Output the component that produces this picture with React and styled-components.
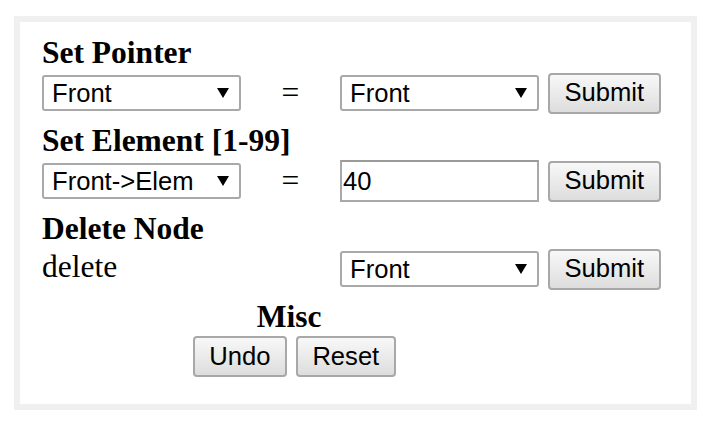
import React from "react";
import styled, { createGlobalStyle } from "styled-components";

const Global = createGlobalStyle`
  html, body { margin: 0; padding: 0; background: #fff; }
  body { font-family: "Liberation Serif", "Times New Roman", serif; color: #000; }
`;

const Page = styled.div`
  padding: 16px 0 0 14px;
`;

const Panel = styled.div`
  box-sizing: border-box;
  width: 683px;
  height: 394px;
  border: 6px solid #f0f0f0;
  background: #fff;
  padding: 13px 0 0 22px;
`;

const Section = styled.section`
  & + & { margin-top: 9px; }
`;

const Heading = styled.div`
  font-family: "Liberation Serif", "Times New Roman", serif;
  font-weight: bold;
  font-size: 31.5px;
  line-height: 36px;
  height: 36px;
  white-space: nowrap;
`;

const Row = styled.div`
  display: grid;
  grid-template-columns: 199px 99px 199px auto;
  align-items: center;
  height: 42px;
  margin-top: 1px;
`;

const Eq = styled.div`
  text-align: center;
  font-family: "Liberation Serif", "Times New Roman", serif;
  font-size: 31.5px;
  line-height: 36px;
`;

const Label = styled.div`
  font-family: "Liberation Serif", "Times New Roman", serif;
  font-size: 31.5px;
  line-height: 36px;
  padding-bottom: 5px;
`;

const SelectWrap = styled.div`
  position: relative;
  width: 199px;
  height: 36px;
  grid-column: ${(p) => p.$col};
`;

const NativeSelect = styled.select`
  appearance: none;
  -webkit-appearance: none;
  box-sizing: border-box;
  width: 100%;
  height: 100%;
  margin: 0;
  border: 2px solid #a9a9a9;
  border-radius: 3px;
  background: #fff;
  color: #000;
  padding: 0 30px 0 8px;
  font-family: "Liberation Sans", Arial, sans-serif;
  font-size: 25.6px;
  outline: none;
`;

const Arrow = styled.svg`
  position: absolute;
  right: 12px;
  top: 50%;
  margin-top: -5px;
  width: 12px;
  height: 10px;
  pointer-events: none;
`;

const TextInput = styled.input`
  box-sizing: border-box;
  grid-column: 3;
  width: 199px;
  height: 42px;
  margin: 0;
  border: 2px solid #a9a9a9;
  border-top-color: #9a9a9a;
  background: #fff;
  color: #000;
  padding: 0 2px 0 1px;
  font-family: "Liberation Sans", Arial, sans-serif;
  font-size: 25.6px;
  outline: none;
`;

const Button = styled.button`
  box-sizing: border-box;
  height: 41px;
  margin: 0;
  margin-left: ${(p) => p.$offset || 0}px;
  justify-self: start;
  padding: 0 14.5px;
  border: 2px solid #a8a8a8;
  border-radius: 4px;
  background: linear-gradient(#f8f8f8, #dddddd);
  color: #000;
  font-family: "Liberation Sans", Arial, sans-serif;
  font-size: 25.6px;
  line-height: 1;
  white-space: nowrap;
`;

const MiscSection = styled.section`
  margin-top: 9px;
  margin-left: 150.7px;
  width: fit-content;
  display: flex;
  flex-direction: column;
  align-items: center;
`;

const MiscTitle = styled(Heading)`
  margin-right: 10px;
`;

const ButtonGroup = styled.div`
  display: flex;
  gap: 9px;
  margin-top: 1px;
`;

function Select({ col, value, options }) {
  return (
    <SelectWrap $col={col}>
      <NativeSelect defaultValue={value}>
        {options.map((o) => (
          <option key={o}>{o}</option>
        ))}
      </NativeSelect>
      <Arrow viewBox="0 0 12 10">
        <polygon points="0,0 12,0 6,10" fill="#000" />
      </Arrow>
    </SelectWrap>
  );
}

export default function App() {
  const ptrs = ["Front", "Rear", "Temp"];
  return (
    <>
      <Global />
      <Page>
        <Panel>
          <Section>
            <Heading>Set Pointer</Heading>
            <Row>
              <Select col={1} value="Front" options={ptrs} />
              <Eq>=</Eq>
              <Select col={3} value="Front" options={ptrs} />
              <Button $offset={9}>Submit</Button>
            </Row>
          </Section>
          <Section>
            <Heading>Set Element [1-99]</Heading>
            <Row>
              <Select col={1} value="Front->Elem" options={["Front->Elem", "Rear->Elem"]} />
              <Eq>=</Eq>
              <TextInput defaultValue="40" />
              <Button $offset={9}>Submit</Button>
            </Row>
          </Section>
          <Section>
            <Heading>Delete Node</Heading>
            <Row>
              <Label>delete</Label>
              <Select col={3} value="Front" options={ptrs} />
              <Button $offset={9}>Submit</Button>
            </Row>
          </Section>
          <MiscSection>
            <MiscTitle>Misc</MiscTitle>
            <ButtonGroup>
              <Button>Undo</Button>
              <Button>Reset</Button>
            </ButtonGroup>
          </MiscSection>
        </Panel>
      </Page>
    </>
  );
}
